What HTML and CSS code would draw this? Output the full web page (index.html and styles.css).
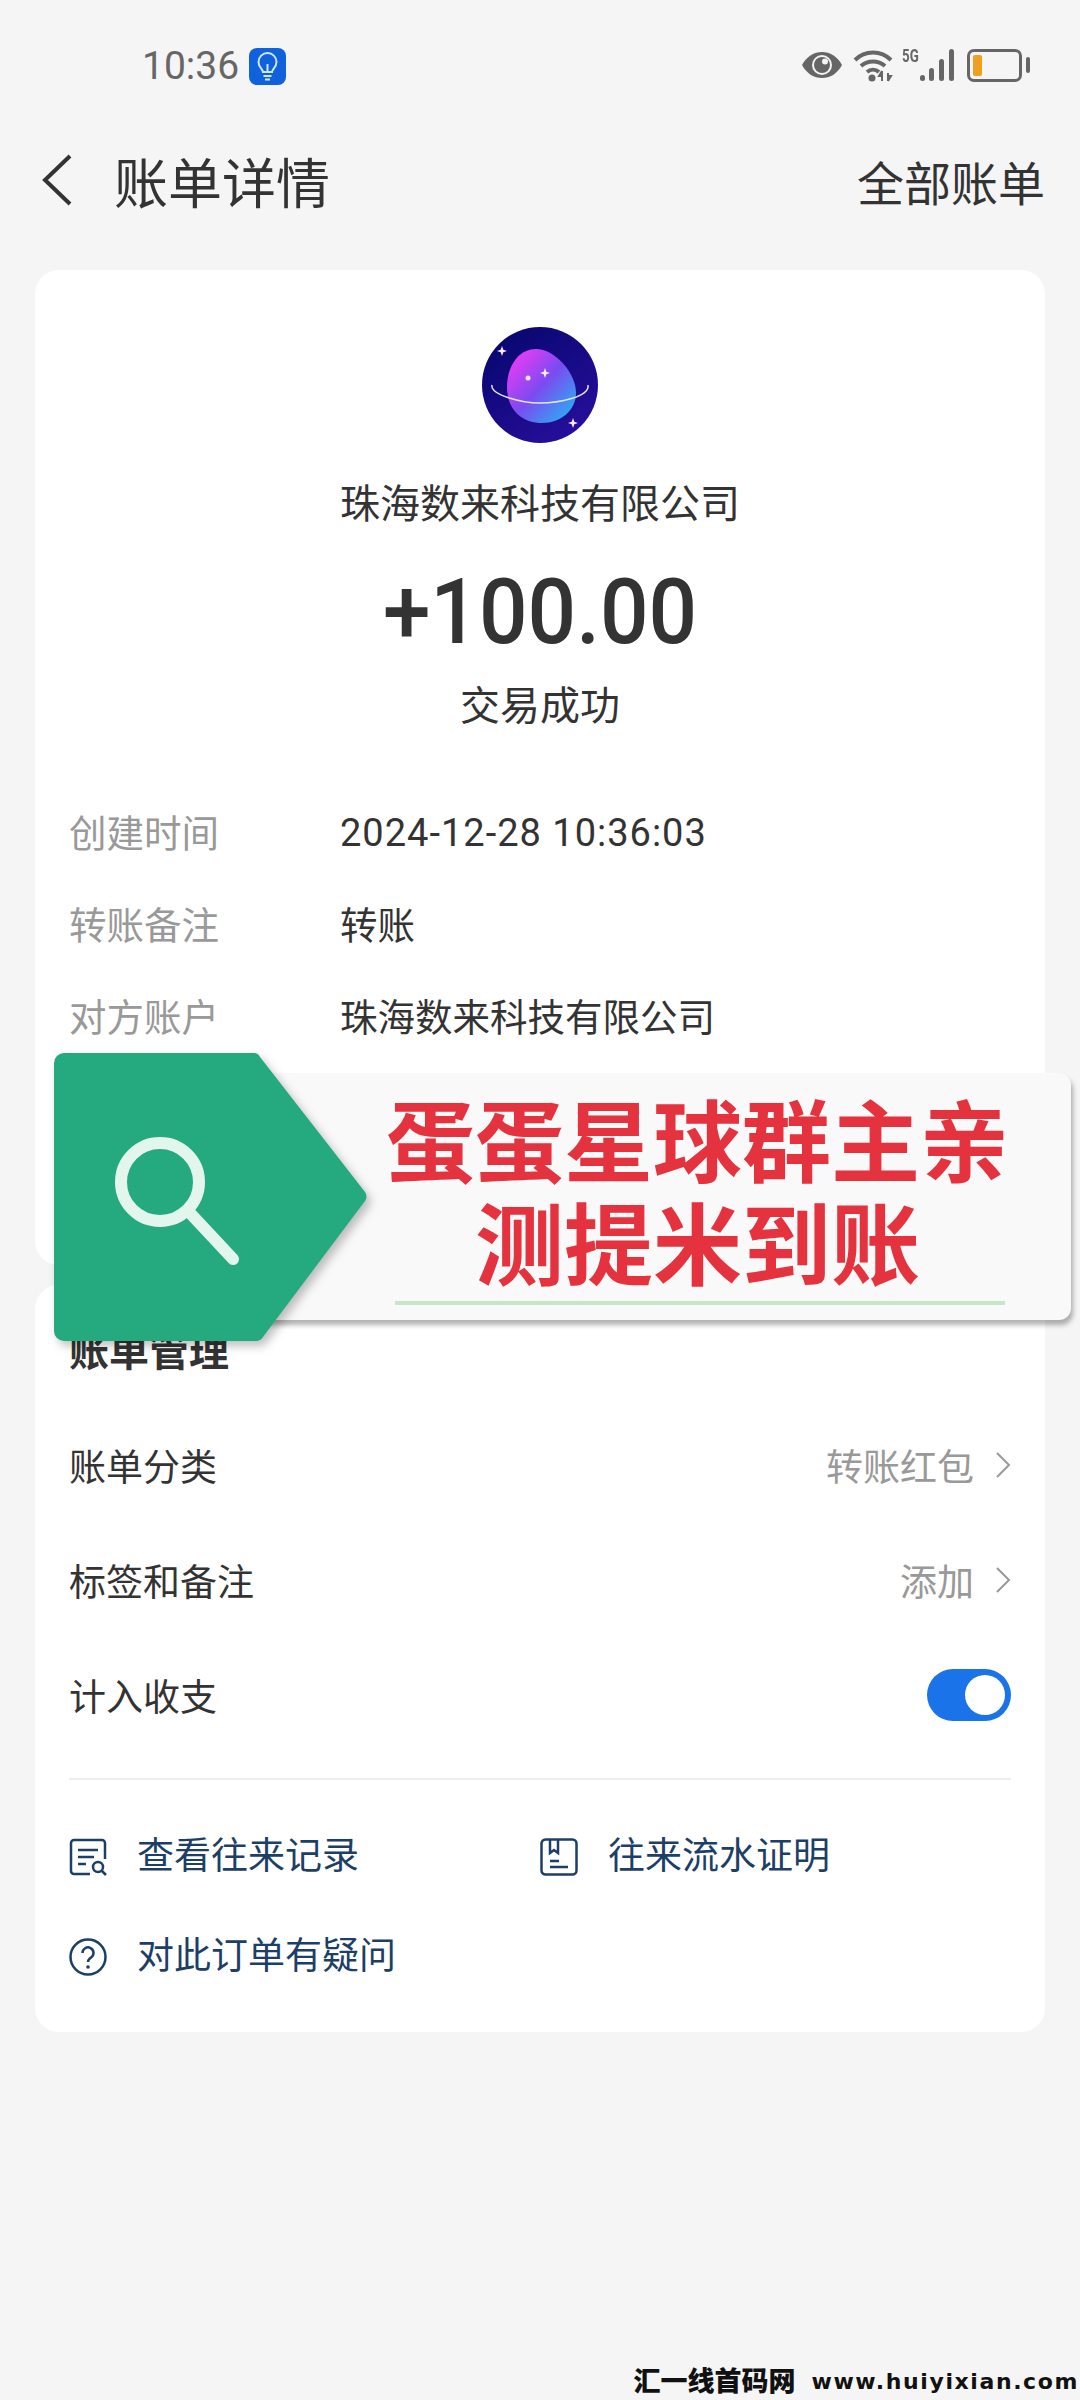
FILE: index.html
```html
<!DOCTYPE html>
<html lang="zh-CN">
	<head>
		<meta charset="utf-8">
		<title>账单详情</title>
		<link rel="stylesheet" href="styles.css">
	</head>
	<body>
		<div class="status_bar">
			<div class="status_left">
				<span class="clock">10:36</span>
				<svg class="bulb" viewBox="0 0 37 37">
					<rect width="37" height="37" rx="8" fill="#0f62dc"/>
					<path d="M14 24c0-3-4.500-4.500-4.500-10a9 9 0 0 1 18 0c0 5.500-4.500 7-4.500 10z" fill="none" stroke="#cfe6ff" stroke-width="2"/>
					<path d="M14.500 28h8M16 31.500h5M18.500 23v-7" fill="none" stroke="#cfe6ff" stroke-width="2"/>
				</svg>
			</div>
			<div class="status_right">
				<svg class="ic_eye" viewBox="0 0 40 26">
					<path d="M0 13C5 4 12 0 20 0s15 4 20 13c-5 9-12 13-20 13S5 22 0 13z" fill="#666"/>
					<circle cx="20" cy="13" r="10" fill="#f5f5f5"/>
					<circle cx="20" cy="13" r="8" fill="#666"/>
					<circle cx="23" cy="9.500" r="3" fill="#f5f5f5"/>
				</svg>
				<svg class="ic_wifi" viewBox="0 0 40 34">
					<path d="M2 12C12 2 28 2 38 12M8 18c7-6 17-6 24 0M14 24c3.500-3 8.500-3 12 0" fill="none" stroke="#666" stroke-width="4"/>
					<circle cx="19" cy="30" r="3.500" fill="#666"/>
					<path d="M29 23v10M35 25v8M29 23l-3 5h3M35 33l3-5h-3" fill="none" stroke="#666" stroke-width="2"/>
				</svg>
				<div class="signal_box">
					<span class="five_g">5G</span>
					<svg class="ic_signal" viewBox="0 0 35 33">
						<rect x="0" y="26" width="5" height="6" rx="2.500" fill="#666"/>
						<rect x="9" y="19" width="5" height="13" rx="2.500" fill="#666"/>
						<rect x="19" y="10" width="5" height="22" rx="2.500" fill="#666"/>
						<rect x="29" y="0" width="5" height="32" rx="2.500" fill="#666"/>
					</svg>
				</div>
				<div class="battery">
					<div class="battery_body"><div class="battery_level"></div></div>
					<div class="battery_cap"></div>
				</div>
			</div>
		</div>

		<div class="nav_bar">
			<div class="nav_left">
				<svg class="ic_back" viewBox="0 0 30 52">
					<path d="M28 2L3 26l25 24" fill="none" stroke="#333" stroke-width="4"/>
				</svg>
				<h1 class="nav_title">账单详情</h1>
			</div>
			<a class="nav_link">全部账单</a>
		</div>

		<div class="card card_bill">
			<svg class="logo" viewBox="0 0 116 116">
				<defs>
					<linearGradient id="fundo" x1="0.2" y1="0" x2="0.9" y2="1">
						<stop offset="0" stop-color="#07076f"/>
						<stop offset="1" stop-color="#2a0fa0"/>
					</linearGradient>
					<linearGradient id="planeta" x1="0.1" y1="0.1" x2="0.9" y2="0.9">
						<stop offset="0" stop-color="#e83cf5"/>
						<stop offset="0.5" stop-color="#7b4bf0"/>
						<stop offset="1" stop-color="#2fa8f5"/>
					</linearGradient>
				</defs>
				<circle cx="58" cy="58" r="58" fill="url(#fundo)"/>
				<path d="M54 22c19 0 40 24 40 44 0 17-15 30-34 30-21 0-35-14-35-36 0-20 11-38 29-38z" fill="url(#planeta)"/>
				<path d="M10 58c-2 10 30 18 48 18s50-6 48-18" fill="none" stroke="#dfe4ff" stroke-width="1.500"/>
				<circle cx="46" cy="51" r="2.500" fill="#fde4ff"/>
				<path d="M63 41l1.300 3.700 3.700 1.300-3.700 1.300-1.300 3.700-1.300-3.700-3.700-1.300 3.700-1.300zM20 19l1.300 3.700 3.700 1.300-3.700 1.300-1.300 3.700-1.300-3.700-3.700-1.300 3.700-1.300zM91 91l1.300 3.700 3.700 1.300-3.700 1.300-1.300 3.700-1.300-3.700-3.700-1.300 3.700-1.300z" fill="#fbeaff"/>
			</svg>
			<div class="company">珠海数来科技有限公司</div>
			<div class="amount">+100.00</div>
			<div class="bill_status">交易成功</div>
			<div class="info_row">
				<span class="info_label">创建时间</span>
				<span class="info_value info_date">2024-12-28 10:36:03</span>
			</div>
			<div class="info_row">
				<span class="info_label">转账备注</span>
				<span class="info_value">转账</span>
			</div>
			<div class="info_row">
				<span class="info_label">对方账户</span>
				<span class="info_value">珠海数来科技有限公司</span>
			</div>
		</div>

		<div class="card card_manage">
			<h2 class="manage_title">账单管理</h2>
			<div class="manage_row">
				<span>账单分类</span>
				<span class="manage_value">转账红包
					<svg class="ic_next" viewBox="0 0 15 26"><path d="M1 1l12 12L1 25" fill="none" stroke="#999" stroke-width="2"/></svg>
				</span>
			</div>
			<div class="manage_row">
				<span>标签和备注</span>
				<span class="manage_value">添加
					<svg class="ic_next" viewBox="0 0 15 26"><path d="M1 1l12 12L1 25" fill="none" stroke="#999" stroke-width="2"/></svg>
				</span>
			</div>
			<div class="manage_row">
				<span>计入收支</span>
				<div class="toggle"><div class="toggle_knob"></div></div>
			</div>
			<div class="divider"></div>
			<div class="links">
				<a class="link_item">
					<svg class="ic_link" viewBox="0 0 38 38">
						<path d="M36 21V5a3 3 0 0 0-3-3H5a3 3 0 0 0-3 3v28a3 3 0 0 0 3 3h16" fill="none" stroke="#1d3f66" stroke-width="2.500"/>
						<path d="M9 12h20M9 19h16M9 26h8" fill="none" stroke="#1d3f66" stroke-width="2.500"/>
						<circle cx="29" cy="29" r="5" fill="none" stroke="#1d3f66" stroke-width="2.500"/>
						<path d="M33 33l4 4" stroke="#1d3f66" stroke-width="2.500"/>
					</svg>
					查看往来记录
				</a>
				<a class="link_item">
					<svg class="ic_link" viewBox="0 0 38 38">
						<rect x="1.500" y="1.500" width="35" height="35" rx="4" fill="none" stroke="#1d3f66" stroke-width="2.500"/>
						<path d="M10 2v13l4-3 4 3V2M10 23h9M10 29h18" fill="none" stroke="#1d3f66" stroke-width="2.500"/>
					</svg>
					往来流水证明
				</a>
				<a class="link_item">
					<svg class="ic_link" viewBox="0 0 38 38">
						<circle cx="19" cy="19" r="17.500" fill="none" stroke="#1d3f66" stroke-width="2.500"/>
						<path d="M13.500 15a5.500 5.500 0 1 1 8.500 4.500c-2 1.300-3 2.200-3 4.500" fill="none" stroke="#1d3f66" stroke-width="2.500"/>
						<circle cx="19" cy="29" r="1.800" fill="#1d3f66"/>
					</svg>
					对此订单有疑问
				</a>
			</div>
		</div>

		<!-- faixa por cima dos cards -->
		<div class="banner">
			<div class="banner_panel">
				<div class="banner_text">蛋蛋星球群主亲</div>
				<div class="banner_text">测提米到账</div>
				<div class="banner_line"></div>
			</div>
			<svg class="banner_tag" viewBox="0 0 314 288">
				<path d="M10 0H200a7 7 0 0 1 6 4L311 139a8 8 0 0 1 0 9L209 284a8 8 0 0 1-6 4H10a10 10 0 0 1-10-10V10A10 10 0 0 1 10 0z" fill="#25aa80"/>
				<circle cx="106" cy="129" r="39" fill="none" stroke="#e2f6ee" stroke-width="12"/>
				<path d="M136 160l43 46" fill="none" stroke="#e2f6ee" stroke-width="12" stroke-linecap="round"/>
			</svg>
		</div>

		<div class="watermark">
			<span class="watermark_cn">汇一线首码网</span>
			<span class="watermark_en">www.huiyixian.com</span>
		</div>
	</body>
</html>
```
FILE: styles.css
```css
html, body{
	margin: 0;
	padding: 0;
}

body{
	position: relative;
	width: 1080px;
	height: 2400px;
	overflow: hidden;
	background: #f5f5f5;
	color: #333;
	font-family: "Roboto", "Noto Sans CJK SC", sans-serif;
}

/*barra de status*/
.status_bar{
	height: 130px;
	display: flex;
	justify-content: space-between;
	align-items: flex-start;
	padding: 47px 50px 0 142px;
	box-sizing: border-box;
}

.status_left{
	display: flex;
	align-items: center;
	gap: 10px;
}

.clock{
	font-size: 39px;
	line-height: 39px;
	color: #666;
}

.bulb{
	width: 37px;
	height: 37px;
}

.status_right{
	display: flex;
	align-items: center;
	height: 36px;
}

.ic_eye{
	width: 40px;
	height: 26px;
	margin-right: 11px;
}

.ic_wifi{
	width: 40px;
	height: 34px;
	margin-right: 9px;
}

.signal_box{
	position: relative;
	width: 53px;
	height: 34px;
	margin-right: 12px;
}

.five_g{
	font-size: 19px;
	line-height: 15px;
	font-weight: 700;
	color: #666;
	display: block;
	transform: scaleX(0.7);
	transform-origin: left top;
}

.ic_signal{
	position: absolute;
	right: 0;
	bottom: 0;
	width: 35px;
	height: 33px;
}

.battery{
	display: flex;
	align-items: center;
	gap: 4px;
}

.battery_body{
	width: 55px;
	height: 33px;
	border: 3px solid #666;
	border-radius: 7px;
	box-sizing: border-box;
	padding: 3px;
}

.battery_level{
	width: 9px;
	height: 100%;
	background: #f0a020;
	border-radius: 2px;
}

.battery_cap{
	width: 4px;
	height: 16px;
	background: #666;
	border-radius: 2px;
}

/*barra de navegacao*/
.nav_bar{
	height: 100px;
	margin-bottom: 40px;
	display: flex;
	justify-content: space-between;
	align-items: center;
	padding: 0 35px 0 42px;
}

.nav_left{
	display: flex;
	align-items: center;
	gap: 42px;
}

.ic_back{
	width: 30px;
	height: 52px;
}

.nav_title{
	margin: 0;
	font-size: 54px;
	font-weight: 400;
}

.nav_link{
	font-size: 47px;
}

/*cards*/
.card{
	width: 1010px;
	margin: 0 35px;
	background: #fff;
	border-radius: 24px;
	box-sizing: border-box;
}

.card_bill{
	height: 995px;
	padding-top: 57px;
	margin-bottom: 20px;
	text-align: center;
}

.logo{
	width: 116px;
	height: 116px;
	display: block;
	margin: 0 auto 34px;
}

.company{
	font-size: 40px;
	line-height: 56px;
}

.amount{
	font-size: 90px;
	line-height: 106px;
	font-weight: 500;
	margin-top: 27px;
	transform: scaleX(0.95);
}

.bill_status{
	font-size: 40px;
	line-height: 56px;
	margin: 13px 0 49px;
}

.info_row{
	display: flex;
	height: 92px;
	align-items: center;
	padding-left: 34px;
	font-size: 37.500px;
	text-align: left;
}

.info_label{
	width: 271px;
	color: #999;
}

.info_date{
	font-size: 38px;
	letter-spacing: 1px;
	padding-top: 5px;
}

.card_manage{
	height: 747px;
	padding: 42px 34px 0;
}

.manage_title{
	margin: 0 0 28px;
	font-size: 40px;
	line-height: 52px;
	font-weight: 700;
}

.manage_row{
	height: 115px;
	display: flex;
	justify-content: space-between;
	align-items: center;
	font-size: 37px;
}

.manage_value{
	display: flex;
	align-items: center;
	gap: 22px;
	color: #999;
}

.ic_next{
	width: 15px;
	height: 26px;
}

.toggle{
	width: 84px;
	height: 52px;
	background: #1a73e8;
	border-radius: 26px;
	display: flex;
	justify-content: flex-end;
	align-items: center;
	padding-right: 6px;
	box-sizing: border-box;
}

.toggle_knob{
	width: 40px;
	height: 40px;
	background: #fff;
	border-radius: 50%;
}

.divider{
	height: 2px;
	background: #eee;
	margin-top: 26px;
}

.links{
	display: grid;
	grid-template-columns: 471px 1fr;
	row-gap: 62px;
	margin-top: 58px;
}

.link_item{
	display: flex;
	align-items: center;
	gap: 30px;
	font-size: 37px;
	line-height: 38px;
	color: #1d3f66;
}

.ic_link{
	width: 38px;
	height: 38px;
}

/*faixa verde e branca*/
.banner{
	position: absolute;
	left: 54px;
	top: 1053px;
	width: 1017px;
	height: 288px;
}

.banner_panel{
	position: absolute;
	left: 150px;
	top: 20px;
	width: 867px;
	height: 247px;
	padding-top: 20px;
	box-sizing: border-box;
	background: #f9f9f9;
	border-radius: 0 12px 12px 0;
	box-shadow: 2px 5px 5px rgba(0, 0, 0, 0.3);
	text-align: center;
}

.banner_text{
	padding-left: 120px;
	font-size: 89px;
	line-height: 103px;
	font-weight: 700;
	color: #e4333f;
}

.banner_line{
	height: 4px;
	margin: 2px 0 0 191px;
	width: 610px;
	background: #c5e6c8;
}

.banner_tag{
	position: absolute;
	left: 0;
	top: 0;
	width: 314px;
	height: 288px;
	filter: drop-shadow(4px 5px 5px rgba(0, 0, 0, 0.25));
}

/*marca d'agua*/
.watermark{
	position: absolute;
	right: 1px;
	bottom: 3px;
	display: flex;
	align-items: center;
	gap: 16px;
	color: #111;
	font-weight: 700;
}

.watermark_cn{
	font-size: 27px;
	line-height: 30px;
	font-weight: 900;
}

.watermark_en{
	font-family: "DejaVu Sans", sans-serif;
	font-size: 22px;
	line-height: 30px;
	letter-spacing: 1.6px;
}
```
